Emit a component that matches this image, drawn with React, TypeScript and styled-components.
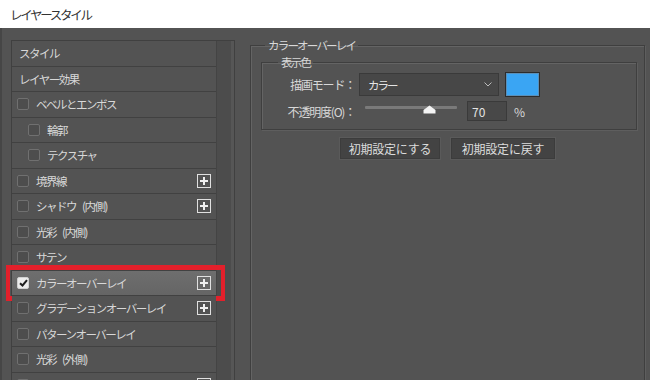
import styled, { createGlobalStyle } from 'styled-components';
import { FC } from 'react';

const GlobalStyle = createGlobalStyle`
body{
    margin: 0;
    background: #535353;
    font-family: "Noto Sans CJK JP", "Noto Sans", sans-serif;
}
`;

const Window = styled.div`
width: 650px;
height: 380px;
overflow: hidden;
display: flex;
flex-direction: column;
`;

const TitleBar = styled.div`
height: 28px;
flex: none;
background: #ffffff;
display: flex;
align-items: center;
padding-left: 10px;
font-size: 12.5px;
letter-spacing: -2.3px;
color: #333;
`;

const Body = styled.div`
flex: 1;
display: flex;
align-items: flex-start;
background: #535353;
border-left: 2px solid #464646;
padding-left: 9px;
`;

const ListBox = styled.div`
margin-top: 12px;
width: 224px;
height: 360px;
display: flex;
border: 1px solid #404040;
box-sizing: border-box;
`;

const Rows = styled.div`
width: 204px;
display: flex;
flex-direction: column;
`;

const ScrollTrack = styled.div`
flex: 1;
background: #4c4c4c;
border-left: 1px solid #444;
box-shadow: inset -3px 0 0 #565656;
`;

const Row = styled.div<{ $indent?: boolean; $plain?: boolean; $active?: boolean }>`
position: relative;
height: 25.5px;
flex: none;
box-sizing: border-box;
display: flex;
align-items: center;
gap: 7px;
padding-left: ${p => (p.$plain ? '7px' : p.$indent ? '16px' : '5px')};
padding-right: 3px;
border-bottom: 1px solid #414141;
background: ${p => (p.$active ? 'linear-gradient(#6e6e6e, #656565)' : '#535353')};
color: #d8d8d8;
font-size: 11.5px;
letter-spacing: -1.5px;
word-spacing: 5px;
white-space: nowrap;
`;

const Label = styled.span`
flex: 1;
`;

const Check = styled.span<{ $on?: boolean }>`
width: 12px;
height: 12px;
flex: none;
box-sizing: border-box;
border: 1px solid ${p => (p.$on ? '#d0d0d0' : '#707070')};
border-radius: 2px;
background: ${p => (p.$on ? '#ececec' : '#4d4d4d')};
display: flex;
align-items: center;
justify-content: center;
`;

const PlusBox = styled.span`
width: 14px;
height: 14px;
flex: none;
margin-right: 2px;
box-sizing: border-box;
border: 1px solid #e0e0e0;
display: flex;
align-items: center;
justify-content: center;
`;

const Highlight = styled.div`
position: absolute;
left: -6px;
right: -9px;
top: -6px;
bottom: -6px;
border: 4px solid #e3202b;
border-width: 5px 4px;
pointer-events: none;
`;

const RightCol = styled.div`
margin-left: 15px;
padding-top: 10px;
`;

const Group = styled.fieldset`
margin: 0;
width: 395px;
height: 400px;
box-sizing: border-box;
padding: 0;
border: 1px solid #3f3f3f;
box-shadow: inset 1px 1px 0 #646464, 1px 1px 0 #5e5e5e;
`;

const Legend = styled.legend<{ $offset: number }>`
margin-left: ${p => p.$offset}px;
padding: 0 3px;
font-size: 11.5px;
line-height: 15px;
letter-spacing: -1.8px;
color: #d8d8d8;
`;

const SubGroup = styled.fieldset`
margin: 2px 7px 0 10px;
padding: 2px 0 8px 0;
border: 1px solid #3f3f3f;
box-shadow: inset 1px 1px 0 #646464, 1px 1px 0 #5e5e5e;
`;

const FormRow = styled.div<{ $gap?: number }>`
display: flex;
align-items: center;
margin-top: ${p => p.$gap ?? 0}px;
color: #d8d8d8;
font-size: 12px;
letter-spacing: -1.2px;
`;

const FieldLabel = styled.span`
width: 93px;
text-align: right;
flex: none;
`;

const Select = styled.div`
margin-left: 4px;
width: 140px;
height: 23px;
box-sizing: border-box;
background: #474747;
border: 1px solid #3a3a3a;
display: flex;
align-items: center;
justify-content: space-between;
padding: 0 6px 0 8px;
color: #e4e4e4;
font-size: 11.5px;
letter-spacing: -2px;
`;

const Swatch = styled.div`
margin-left: 6px;
width: 35px;
height: 25px;
box-sizing: border-box;
background: #3aa5f3;
border: 1px solid #2c2c2c;
box-shadow: inset 0 0 0 1px #5a8fb8;
`;

const Slider = styled.div`
position: relative;
margin-left: 10px;
width: 92px;
height: 20px;
`;

const Track = styled.div`
position: absolute;
left: 0;
right: 0;
top: 5px;
height: 3px;
background: #7a7a7a;
border-radius: 1px;
`;

const Thumb = styled.svg`
position: absolute;
top: 4px;
left: 58px;
`;

const NumberBox = styled.div`
margin-left: 10px;
width: 40px;
height: 20px;
box-sizing: border-box;
background: #484848;
border: 1px solid #3a3a3a;
display: flex;
align-items: center;
padding-left: 4px;
color: #e4e4e4;
letter-spacing: 0;
`;

const Unit = styled.span`
margin-left: 7px;
letter-spacing: 0;
`;

const Buttons = styled.div`
display: flex;
justify-content: center;
gap: 11px;
margin-top: 8px;
`;

const Button = styled.div<{ $w: number }>`
width: ${p => p.$w}px;
height: 21px;
box-sizing: border-box;
background: #434343;
border: 1px solid #3c3c3c;
box-shadow: 0 0 0 1px #5a5a5a;
display: flex;
align-items: center;
justify-content: center;
color: #dcdcdc;
font-size: 12px;
letter-spacing: -0.2px;
`;

const CheckMark: FC = () => (
    <svg width="9" height="8" viewBox="0 0 9 8">
        <path d="M1 4.2 L3.5 6.5 L8 1.2" stroke="#1e1e1e" strokeWidth="2" fill="none" />
    </svg>
);

const PlusIcon: FC = () => (
    <svg width="10" height="10" viewBox="0 0 10 10">
        <path d="M5 1 V9 M1 5 H9" stroke="#f0f0f0" strokeWidth="2" />
    </svg>
);

type Effect = { name: string; check?: boolean; indent?: boolean; plus?: boolean; on?: boolean };

const effects: Effect[] = [
    { name: 'スタイル' },
    { name: 'レイヤー効果' },
    { name: 'ベベルとエンボス', check: true },
    { name: '輪郭', check: true, indent: true },
    { name: 'テクスチャ', check: true, indent: true },
    { name: '境界線', check: true, plus: true },
    { name: 'シャドウ (内側)', check: true, plus: true },
    { name: '光彩 (内側)', check: true },
    { name: 'サテン', check: true },
    { name: 'カラーオーバーレイ', check: true, plus: true, on: true },
    { name: 'グラデーションオーバーレイ', check: true, plus: true },
    { name: 'パターンオーバーレイ', check: true },
    { name: '光彩 (外側)', check: true },
    { name: 'ドロップシャドウ', check: true, plus: true },
];

export default function App() {
    return (
        <Window>
            <GlobalStyle />
            <TitleBar>レイヤースタイル</TitleBar>
            <Body>
                <ListBox>
                    <Rows>
                        {effects.map(e => (
                            <Row key={e.name} $indent={e.indent} $plain={!e.check} $active={e.on}>
                                {e.check && <Check $on={e.on}>{e.on && <CheckMark />}</Check>}
                                <Label>{e.name}</Label>
                                {e.plus && <PlusBox><PlusIcon /></PlusBox>}
                                {e.on && <Highlight />}
                            </Row>
                        ))}
                    </Rows>
                    <ScrollTrack />
                </ListBox>
                <RightCol>
                    <Group>
                        <Legend $offset={14}>カラーオーバーレイ</Legend>
                        <SubGroup>
                            <Legend $offset={16}>表示色</Legend>
                            <FormRow>
                                <FieldLabel>描画モード：</FieldLabel>
                                <Select>
                                    <span>カラー</span>
                                    <svg width="8" height="5" viewBox="0 0 8 5">
                                        <path d="M0.5 0.5 L4 4 L7.5 0.5" stroke="#bbb" fill="none" />
                                    </svg>
                                </Select>
                                <Swatch />
                            </FormRow>
                            <FormRow $gap={4}>
                                <FieldLabel>不透明度(O)：</FieldLabel>
                                <Slider>
                                    <Track />
                                    <Thumb width="13" height="9" viewBox="0 0 13 9">
                                        <path d="M6.5 0.5 L12.5 5 L12.5 8.5 L0.5 8.5 L0.5 5 Z" fill="#f4f4f4" />
                                    </Thumb>
                                </Slider>
                                <NumberBox>70</NumberBox>
                                <Unit>%</Unit>
                            </FormRow>
                        </SubGroup>
                        <Buttons>
                            <Button $w={100}>初期設定にする</Button>
                            <Button $w={104}>初期設定に戻す</Button>
                        </Buttons>
                    </Group>
                </RightCol>
            </Body>
        </Window>
    );
}
